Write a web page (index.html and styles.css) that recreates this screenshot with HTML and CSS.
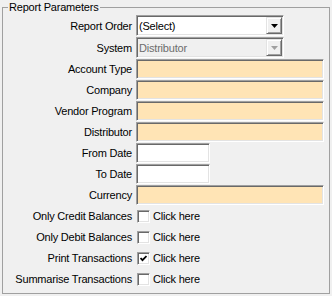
FILE: index.html
```html
<!DOCTYPE html>
<html lang="en">
<head>
    <meta charset="UTF-8">
    <title>Report Parameters</title>
    <link rel="stylesheet" href="styles.css">
</head>
<body>
    <fieldset class="params">
        <legend>Report Parameters</legend>
        <div class="rows">
            <label class="lbl">Report Order</label>
            <div class="combo">
                <span class="combo-text">(Select)</span>
                <span class="combo-btn"><svg width="7" height="4" viewBox="0 0 7 4"><path d="M0 0h7L3.5 4z" fill="#000"/></svg></span>
            </div>

            <label class="lbl">System</label>
            <div class="combo disabled">
                <span class="combo-text">Distributor</span>
                <span class="combo-btn"><svg width="7" height="4" viewBox="0 0 7 4"><path d="M0 0h7L3.5 4z" fill="#a0a0a0"/></svg></span>
            </div>

            <label class="lbl">Account Type</label>
            <div class="field wide"></div>

            <label class="lbl">Company</label>
            <div class="field wide"></div>

            <label class="lbl">Vendor Program</label>
            <div class="field wide"></div>

            <label class="lbl">Distributor</label>
            <div class="field wide"></div>

            <label class="lbl">From Date</label>
            <div class="field date"></div>

            <label class="lbl">To Date</label>
            <div class="field date"></div>

            <label class="lbl">Currency</label>
            <div class="field wide"></div>

            <label class="lbl">Only Credit Balances</label>
            <div class="check"><span class="box"></span>Click here</div>

            <label class="lbl">Only Debit Balances</label>
            <div class="check"><span class="box"></span>Click here</div>

            <label class="lbl">Print Transactions</label>
            <div class="check"><span class="box"><svg width="7" height="7" viewBox="0 0 7 7"><path d="M0.5 3l2 2.2L6.5 1" fill="none" stroke="#000" stroke-width="1.8"/></svg></span>Click here</div>

            <label class="lbl">Summarise Transactions</label>
            <div class="check"><span class="box"></span>Click here</div>
        </div>
    </fieldset>
</body>
</html>
```

FILE: styles.css
```css
body {
    margin: 0;
    background-color: #f0f0f0;
    font-family: "Liberation Sans", Arial, sans-serif;
    font-size: 11px;
    letter-spacing: -0.2px;
    color: #000;
}
.params {
    box-sizing: border-box;
    width: 328px;
    height: 294px;
    margin: 0 2px;
    padding: 1px 0 2px 0;
    border: 1px solid #a0a0a0;
    min-inline-size: 0;
}
.params legend {
    margin-left: 5px;
    padding: 0 1px;
    line-height: 14px;
}
.rows {
    display: grid;
    grid-template-columns: 129px auto;
    grid-auto-rows: minmax(20px, auto);
    column-gap: 4px;
    row-gap: 1px;
}
.lbl {
    display: flex;
    align-items: center;
    justify-content: flex-end;
    white-space: nowrap;
}
/* sunken 3d border */
.field, .combo, .box {
    box-sizing: border-box;
    border: 1px solid;
    border-color: #a0a0a0 #ffffff #ffffff #a0a0a0;
    box-shadow: inset 1px 1px 0 #696969, inset -1px -1px 0 #e3e3e3;
}
.field {
    height: 20px;
    background-color: #ffe4b5;
}
.wide {
    width: 188px;
}
.date {
    width: 74px;
    background-color: #fff;
}
.combo {
    width: 148px;
    height: 21px;
    display: flex;
    align-items: center;
    justify-content: space-between;
    padding: 1px 1px 1px 2px;
    background-color: #fff;
}
.combo.disabled {
    background-color: #f0f0f0;
    color: #6d6d6d;
}
.combo-btn {
    box-sizing: border-box;
    width: 16px;
    height: 17px;
    display: flex;
    align-items: center;
    justify-content: center;
    background-color: #f0f0f0;
    border: 1px solid;
    border-color: #e3e3e3 #696969 #696969 #e3e3e3;
    box-shadow: inset 1px 1px 0 #fff, inset -1px -1px 0 #a0a0a0;
}
.check {
    display: flex;
    align-items: center;
    gap: 3px;
    padding-left: 1px;
}
.box {
    width: 13px;
    height: 13px;
    display: flex;
    align-items: center;
    justify-content: center;
    background-color: #fff;
}
```
